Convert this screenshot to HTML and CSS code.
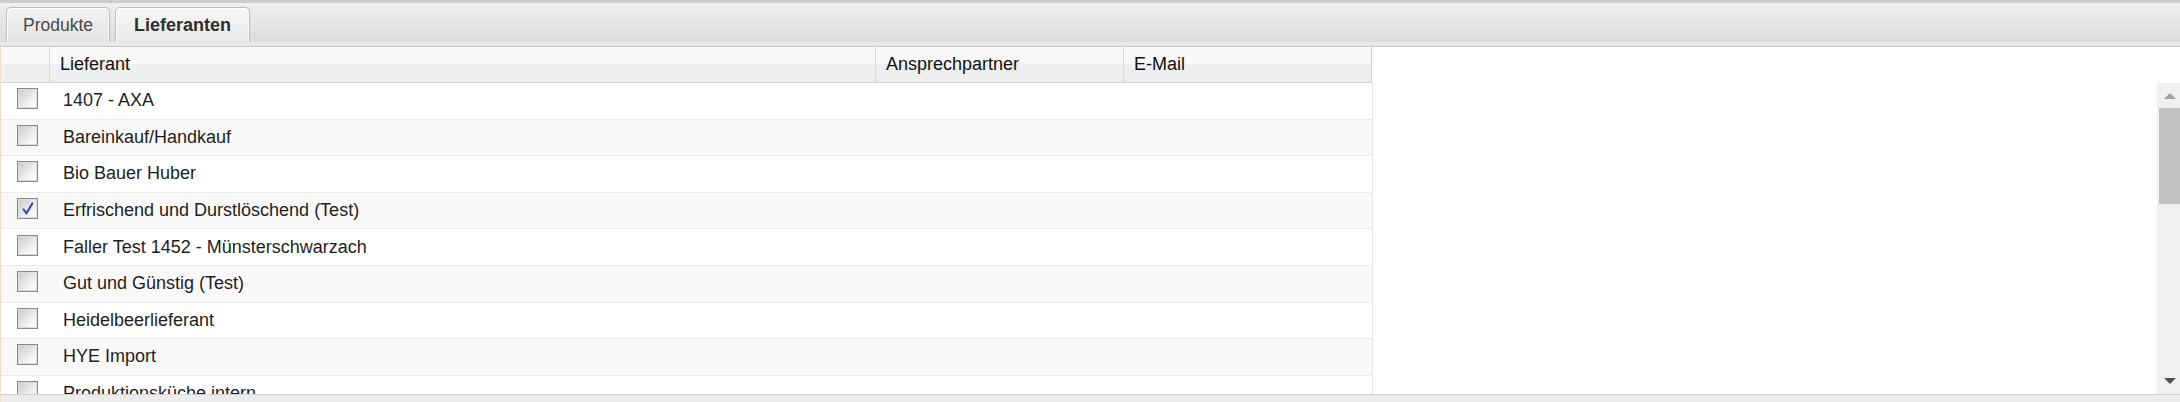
FILE: index.html
```html
<!DOCTYPE html>
<html lang="de">
<head>
<meta charset="utf-8">
<title>Lieferanten</title>
<link rel="stylesheet" href="styles.css">
</head>
<body>
<div class="app">
  <div class="tabbar">
    <div class="tab">Produkte</div>
    <div class="tab active">Lieferanten</div>
  </div>
  <div class="band"></div>
  <div class="grid">
    <div class="head">
      <div class="hcell c-check"></div>
      <div class="hcell c-name">Lieferant</div>
      <div class="hcell c-contact">Ansprechpartner</div>
      <div class="hcell c-mail">E-Mail</div>
    </div>
    <div class="body">
      <div class="rows">
        <div class="row"><div class="cell c-check"><span class="cb"></span></div><div class="cell c-name">1407 - AXA</div><div class="cell c-contact"></div><div class="cell c-mail"></div></div>
        <div class="row alt"><div class="cell c-check"><span class="cb"></span></div><div class="cell c-name">Bareinkauf/Handkauf</div><div class="cell c-contact"></div><div class="cell c-mail"></div></div>
        <div class="row"><div class="cell c-check"><span class="cb"></span></div><div class="cell c-name">Bio Bauer Huber</div><div class="cell c-contact"></div><div class="cell c-mail"></div></div>
        <div class="row alt"><div class="cell c-check"><span class="cb checked"><svg viewBox="0 0 20 20" width="18" height="18"><path d="M5 10.5 L8.3 14.8 L14.8 3.8" fill="none" stroke="#3550a8" stroke-width="2.3" stroke-linejoin="round" stroke-linecap="round"/></svg></span></div><div class="cell c-name">Erfrischend und Durstlöschend (Test)</div><div class="cell c-contact"></div><div class="cell c-mail"></div></div>
        <div class="row"><div class="cell c-check"><span class="cb"></span></div><div class="cell c-name">Faller Test 1452 - Münsterschwarzach</div><div class="cell c-contact"></div><div class="cell c-mail"></div></div>
        <div class="row alt"><div class="cell c-check"><span class="cb"></span></div><div class="cell c-name">Gut und Günstig (Test)</div><div class="cell c-contact"></div><div class="cell c-mail"></div></div>
        <div class="row"><div class="cell c-check"><span class="cb"></span></div><div class="cell c-name">Heidelbeerlieferant</div><div class="cell c-contact"></div><div class="cell c-mail"></div></div>
        <div class="row alt"><div class="cell c-check"><span class="cb"></span></div><div class="cell c-name">HYE Import</div><div class="cell c-contact"></div><div class="cell c-mail"></div></div>
        <div class="row"><div class="cell c-check"><span class="cb"></span></div><div class="cell c-name">Produktionsküche intern</div><div class="cell c-contact"></div><div class="cell c-mail"></div></div>
      </div>
      <div class="vscroll">
        <div class="sbtn up"><span class="tri-up"></span></div>
        <div class="thumb"></div>
        <div class="track"></div>
        <div class="sbtn down"><span class="tri-down"></span></div>
      </div>
    </div>
    <div class="footer"></div>
  </div>
</div>
</body>
</html>
```

FILE: styles.css
```css
* { box-sizing: border-box; }
html, body { margin: 0; padding: 0; background: #fff; }
body {
  width: 2180px;
  height: 402px;
  overflow: hidden;
  font-family: "Liberation Sans", Arial, sans-serif;
  font-size: 18px;
  color: #222;
}
.app { display: flex; flex-direction: column; height: 402px; }

.tabbar {
  display: flex;
  align-items: flex-end;
  gap: 5px;
  height: 42px;
  padding-left: 6px;
  border-top: 3px solid #cdcdcd;
  background: linear-gradient(#efefef, #dcdcdc);
}
.tab {
  height: 35px;
  padding: 0 16px;
  display: flex;
  align-items: center;
  border: 1px solid #bdbdbd;
  border-bottom: none;
  border-radius: 5px 5px 0 0;
  background: linear-gradient(#f3f3f3, #e4e4e4);
  box-shadow: inset 1px 1px 0 #fff, inset -1px 0 0 #fafafa;
  color: #4b4b4b;
  font-size: 17.5px;
}
.tab.active {
  padding: 0 18px;
  font-weight: bold;
  color: #2f2f2f;
  background: linear-gradient(#f6f6f6, #eaeaea);
  font-size: 18px;
}
.band {
  height: 5px;
  background: #e9e9e9;
  border-bottom: 1px solid #c8c8c8;
}

.grid {
  flex: 1;
  display: flex;
  flex-direction: column;
  border-left: 1px solid #f1dcc6;
  min-height: 0;
}
.head {
  display: flex;
  width: 1371px;
  height: 36px;
  border-bottom: 1px solid #d3d3d3;
  border-right: 1px solid #cfcfcf;
  background: linear-gradient(#f9f9f9 0%, #f9f9f9 50%, #eeeff1 50%, #eeeff1 100%);
}
.hcell {
  display: flex;
  align-items: center;
  padding-left: 10px;
  color: #111;
  border-right: 1px solid #d9d9d9;
}
.hcell:last-child { border-right: none; }
.c-check { width: 49px; flex: none; }
.c-name { width: 826px; flex: none; }
.c-contact { width: 248px; flex: none; }
.c-mail { width: 247px; flex: none; }

.body {
  flex: 1;
  display: flex;
  min-height: 0;
}
.rows {
  flex: 1;
  overflow: hidden;
}
.row {
  display: flex;
  width: 1372px;
  height: 36.6px;
  border-bottom: 1px solid #ebebeb;
  border-right: 1px solid #e6e6e6;
  background: #fff;
}
.row.alt { background: #f9f9f9; }
.cell {
  display: flex;
  align-items: center;
  color: #1e1e1e;
  white-space: nowrap;
}
.cell.c-check { padding-left: 16px; }
.cell.c-name { padding-left: 13px; }

.cb {
  width: 21px;
  height: 21px;
  display: flex;
  align-items: center;
  justify-content: center;
  border: 1px solid #8a8a8a;
  box-shadow: inset 0 0 0 1px #dcdcdc;
  background: linear-gradient(135deg, #c9cacb 0%, #e6e6e7 45%, #fafafa 80%, #fff 100%);
  margin-top: -4px;
}

.vscroll {
  width: 23px;
  flex: none;
  display: flex;
  flex-direction: column;
  background: #f0f0f0;
}
.sbtn {
  height: 25px;
  flex: none;
  display: flex;
  align-items: center;
  justify-content: center;
  padding-left: 2px;
}
.thumb {
  height: 96px;
  flex: none;
  margin-left: 2px;
  background: #c1c1c1;
}
.track { flex: 1; }
.sbtn.down { align-items: flex-start; padding-top: 6px; height: 22px; }
.tri-up {
  width: 0; height: 0;
  border-left: 6px solid transparent;
  border-right: 6px solid transparent;
  border-bottom: 6px solid #a3a3a3;
}
.tri-down {
  width: 0; height: 0;
  border-left: 6px solid transparent;
  border-right: 6px solid transparent;
  border-top: 6px solid #505050;
}
.footer {
  height: 8px;
  flex: none;
  border-top: 1px solid #d3d3d3;
  background: #ececec;
}
```
